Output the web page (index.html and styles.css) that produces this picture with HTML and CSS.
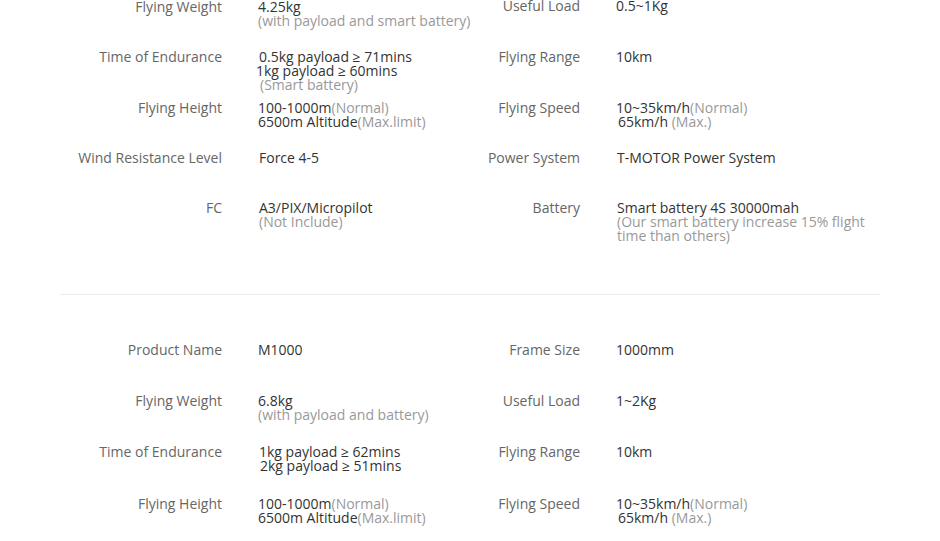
FILE: index.html
```html
<!DOCTYPE html>
<html lang="en">
<head>
<meta charset="utf-8">
<title>Specifications</title>
<link rel="stylesheet" href="styles.css">
</head>
<body>
<div class="specs">
  <section class="spec-block first">
    <div class="pair left">
      <div class="label">Flying Weight</div>
      <div class="value"><span class="ln">4.25kg</span><span class="ln note">(with payload and smart battery)</span></div>
    </div>
    <div class="pair right up">
      <div class="label">Useful Load</div>
      <div class="value"><span class="ln">0.5~1Kg</span></div>
    </div>

    <div class="pair left">
      <div class="label">Time of Endurance</div>
      <div class="value"><span class="ln in1">0.5kg payload ≥ 71mins</span><span class="ln out2">1kg payload ≥ 60mins</span><span class="ln note in2">(Smart battery)</span></div>
    </div>
    <div class="pair right">
      <div class="label">Flying Range</div>
      <div class="value"><span class="ln">10km</span></div>
    </div>

    <div class="pair left">
      <div class="label">Flying Height</div>
      <div class="value"><span class="ln">100-1000m<span class="note">(Normal)</span></span><span class="ln">6500m Altitude<span class="note">(Max.limit)</span></span></div>
    </div>
    <div class="pair right">
      <div class="label">Flying Speed</div>
      <div class="value"><span class="ln">10~35km/h<span class="note">(Normal)</span></span><span class="ln in2">65km/h <span class="note">(Max.)</span></span></div>
    </div>

    <div class="pair left">
      <div class="label">Wind Resistance Level</div>
      <div class="value"><span class="ln in1">Force 4-5</span></div>
    </div>
    <div class="pair right">
      <div class="label">Power System</div>
      <div class="value"><span class="ln in1">T-MOTOR Power System</span></div>
    </div>

    <div class="pair left">
      <div class="label">FC</div>
      <div class="value"><span class="ln in1">A3/PIX/Micropilot</span><span class="ln note in1">(Not Include)</span></div>
    </div>
    <div class="pair right">
      <div class="label">Battery</div>
      <div class="value"><span class="ln in1">Smart battery 4S 30000mah</span><span class="ln note in1">(Our smart battery increase 15% flight time than others)</span></div>
    </div>
  </section>

  <section class="spec-block second">
    <div class="pair left">
      <div class="label">Product Name</div>
      <div class="value"><span class="ln">M1000</span></div>
    </div>
    <div class="pair right">
      <div class="label">Frame Size</div>
      <div class="value"><span class="ln">1000mm</span></div>
    </div>

    <div class="pair left">
      <div class="label">Flying Weight</div>
      <div class="value"><span class="ln">6.8kg</span><span class="ln note">(with payload and battery)</span></div>
    </div>
    <div class="pair right">
      <div class="label">Useful Load</div>
      <div class="value"><span class="ln">1~2Kg</span></div>
    </div>

    <div class="pair left">
      <div class="label">Time of Endurance</div>
      <div class="value"><span class="ln in1">1kg payload ≥ 62mins</span><span class="ln in2">2kg payload ≥ 51mins</span></div>
    </div>
    <div class="pair right">
      <div class="label">Flying Range</div>
      <div class="value"><span class="ln">10km</span></div>
    </div>

    <div class="pair left">
      <div class="label">Flying Height</div>
      <div class="value"><span class="ln">100-1000m<span class="note">(Normal)</span></span><span class="ln">6500m Altitude<span class="note">(Max.limit)</span></span></div>
    </div>
    <div class="pair right">
      <div class="label">Flying Speed</div>
      <div class="value"><span class="ln">10~35km/h<span class="note">(Normal)</span></span><span class="ln in2">65km/h <span class="note">(Max.)</span></span></div>
    </div>
  </section>
</div>
</body>
</html>
```

FILE: styles.css
```css
html, body {
  margin: 0;
  padding: 0;
  background: #fff;
}

body {
  font-family: "Open Sans", "Liberation Sans", Arial, sans-serif;
  font-size: 14px;
  line-height: 14px;
  color: #333;
  overflow: hidden;
}

.specs {
  width: 820px;
  margin-left: 60px;
}

.spec-block {
  display: grid;
  grid-template-columns: 420px 400px;
  grid-auto-rows: 51.3px;
  align-items: start;
  padding: 48px 0 42px;
  border-top: 1px solid #ececec;
}

.spec-block.first {
  grid-auto-rows: 50.25px;
  padding: 0 0 42.5px;
  border-top: none;
}

.pair {
  display: flex;
  align-items: flex-start;
}

.pair.up {
  margin-top: -1px;
}

.label {
  flex: none;
  text-align: right;
  color: #666;
  white-space: nowrap;
}

.left .label {
  width: 162px;
}

.right .label {
  width: 100px;
}

.value {
  flex: 1;
  min-width: 0;
  margin-left: 36px;
  color: #333;
}

.ln {
  display: block;
}

.note {
  color: #999;
}

.in1 {
  padding-left: 1px;
}

.in2 {
  padding-left: 2px;
}

.out2 {
  margin-left: -2px;
}
```
